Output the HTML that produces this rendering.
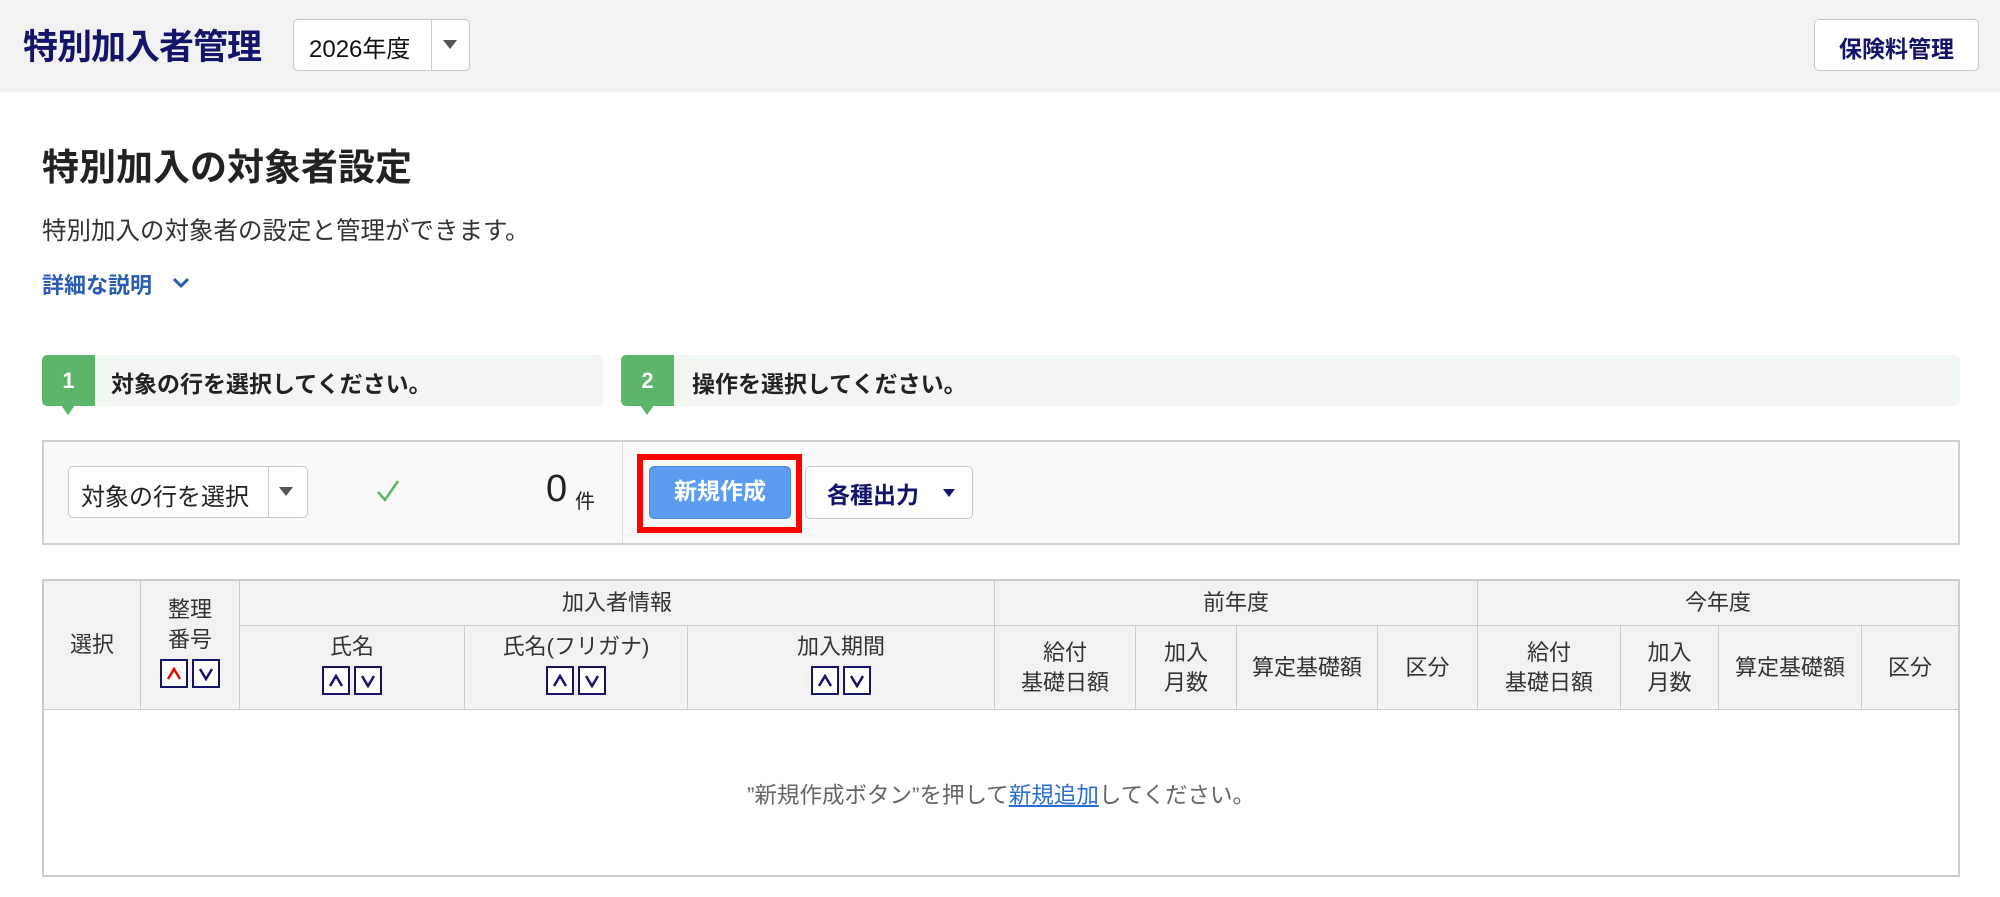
<!DOCTYPE html>
<html><head><meta charset="utf-8">
<style>
*{box-sizing:border-box;margin:0;padding:0}
body{width:2000px;height:897px;position:relative;background:#fff;font-family:"Liberation Sans","Noto Sans CJK JP",sans-serif;color:#333;overflow:hidden}
.a{position:absolute}
.hdr{left:0;top:0;width:2000px;height:92px;background:#f2f2f2}
.navy{color:#14146b}
.btn{border:1px solid #c8c8c8;border-radius:5px;background:#fff}
.step{background:#f1f8f1;border-radius:5px;height:51px}
.num{background:#5cb56a;color:#fff;font-weight:bold;font-size:22px;width:53px;height:51px;display:flex;align-items:center;justify-content:center;border-radius:5px 0 0 5px}
.tri{width:0;height:0;border-left:7px solid transparent;border-right:7px solid transparent;border-top:10px solid #5cb56a}
.steptxt{font-weight:bold;font-size:23px;color:#222}
.th{background:#f2f2f2;border-right:1px solid #ccc;border-bottom:1px solid #ccc;font-size:22px;color:#333;text-align:center;line-height:30px;display:flex;flex-direction:column;align-items:center;justify-content:center}
.sb{display:inline-block;width:28px;height:29px;border:2px solid #14146b;background:#fff;margin:0 2px;position:relative}
.sb svg{position:absolute;left:5px;top:6px}
</style></head><body>
<div class="a hdr"></div>
<div class="a navy" style="left:23px;top:19px;font-size:35px;font-weight:bold;letter-spacing:-1px">特別加入者管理</div>
<div class="a btn" style="left:293px;top:19px;width:177px;height:52px"></div>
<div class="a" style="left:309px;top:29px;font-size:24px;color:#111">2026年度</div>
<div class="a" style="left:431px;top:20px;width:1px;height:50px;background:#ccc"></div>
<div class="a" style="left:443px;top:40px;width:0;height:0;border-left:7px solid transparent;border-right:7px solid transparent;border-top:9px solid #555"></div>
<div class="a btn" style="left:1814px;top:19px;width:165px;height:52px"></div>
<div class="a navy" style="left:1814px;top:30px;width:165px;text-align:center;font-size:23px;font-weight:bold">保険料管理</div>

<div class="a" style="left:42px;top:137px;font-size:37px;font-weight:bold;color:#222">特別加入の対象者設定</div>
<div class="a" style="left:42px;top:212px;font-size:24.5px;color:#333">特別加入の対象者の設定と管理ができます。</div>
<div class="a" style="left:42px;top:268px;font-size:22px;font-weight:bold;color:#2a5db0">詳細な説明</div>
<svg class="a" style="left:172px;top:277px" width="18" height="12"><path d="M2 2 L9 9 L16 2" stroke="#2a5db0" stroke-width="3" fill="none"/></svg>

<div class="a step" style="left:42px;top:355px;width:561px"></div>
<div class="a num" style="left:42px;top:355px">1</div>
<div class="a tri" style="left:61px;top:405px"></div>
<div class="a steptxt" style="left:111px;top:365px">対象の行を選択してください。</div>
<div class="a step" style="left:621px;top:355px;width:1339px"></div>
<div class="a num" style="left:621px;top:355px">2</div>
<div class="a tri" style="left:640px;top:405px"></div>
<div class="a steptxt" style="left:692px;top:365px">操作を選択してください。</div>

<div class="a" style="left:42px;top:440px;width:1918px;height:105px;background:#f9f9f9;border:2px solid #d0d0d0"></div>
<div class="a" style="left:622px;top:442px;width:1px;height:101px;background:#ddd"></div>
<div class="a btn" style="left:68px;top:466px;width:240px;height:52px"></div>
<div class="a" style="left:81px;top:477px;font-size:24px;color:#222">対象の行を選択</div>
<div class="a" style="left:268px;top:467px;width:1px;height:50px;background:#ccc"></div>
<div class="a" style="left:279px;top:487px;width:0;height:0;border-left:7px solid transparent;border-right:7px solid transparent;border-top:9px solid #555"></div>
<svg class="a" style="left:375px;top:478px" width="26" height="26"><path d="M3 14 L10 22 L23 3" stroke="#5cb56a" stroke-width="2.5" fill="none"/></svg>
<div class="a" style="left:546px;top:468px;font-size:38px;color:#222">0</div>
<div class="a" style="left:575px;top:485px;font-size:20px;color:#222">件</div>
<div class="a" style="left:637px;top:454px;width:165px;height:79px;border:6px solid #f00"></div>
<div class="a" style="left:649px;top:466px;width:142px;height:53px;background:#5b9cf0;border-radius:5px;border:1px solid #4a8ae0;color:#fff;font-weight:bold;font-size:23px;text-align:center;line-height:48px">新規作成</div>
<div class="a btn" style="left:805px;top:466px;width:168px;height:53px"></div>
<div class="a navy" style="left:827px;top:476px;font-size:23px;font-weight:bold">各種出力</div>
<div class="a" style="left:943px;top:489px;width:0;height:0;border-left:6px solid transparent;border-right:6px solid transparent;border-top:8px solid #14146b"></div>

<div class="a" style="left:42px;top:579px;width:1918px;height:298px;border:2px solid #ccc"></div>
<div class="a th" style="left:44px;top:581px;width:97px;height:129px">選択</div>
<div class="a th" style="left:141px;top:581px;width:99px;height:129px"><div>整理<br>番号</div><div style="margin-top:4px"><span class="sb"><svg width="14" height="14"><path d="M1 12 L7 2 L13 12" stroke="#e00" stroke-width="2.5" fill="none"/></svg></span><span class="sb"><svg width="14" height="14"><path d="M1 2 L7 12 L13 2" stroke="#14146b" stroke-width="2.5" fill="none"/></svg></span></div></div>
<div class="a th" style="left:240px;top:581px;width:755px;height:45px">加入者情報</div>
<div class="a th" style="left:995px;top:581px;width:483px;height:45px">前年度</div>
<div class="a th" style="left:1478px;top:581px;width:480px;height:45px;border-right:none">今年度</div>
<div class="a th" style="left:240px;top:626px;width:225px;height:84px"><div>氏名</div><div style="margin-top:4px"><span class="sb"><svg width="14" height="14"><path d="M1 12 L7 2 L13 12" stroke="#14146b" stroke-width="2.5" fill="none"/></svg></span><span class="sb"><svg width="14" height="14"><path d="M1 2 L7 12 L13 2" stroke="#14146b" stroke-width="2.5" fill="none"/></svg></span></div></div>
<div class="a th" style="left:465px;top:626px;width:223px;height:84px"><div>氏名(フリガナ)</div><div style="margin-top:4px"><span class="sb"><svg width="14" height="14"><path d="M1 12 L7 2 L13 12" stroke="#14146b" stroke-width="2.5" fill="none"/></svg></span><span class="sb"><svg width="14" height="14"><path d="M1 2 L7 12 L13 2" stroke="#14146b" stroke-width="2.5" fill="none"/></svg></span></div></div>
<div class="a th" style="left:688px;top:626px;width:307px;height:84px"><div>加入期間</div><div style="margin-top:4px"><span class="sb"><svg width="14" height="14"><path d="M1 12 L7 2 L13 12" stroke="#14146b" stroke-width="2.5" fill="none"/></svg></span><span class="sb"><svg width="14" height="14"><path d="M1 2 L7 12 L13 2" stroke="#14146b" stroke-width="2.5" fill="none"/></svg></span></div></div>
<div class="a th" style="left:995px;top:626px;width:141px;height:84px">給付<br>基礎日額</div>
<div class="a th" style="left:1136px;top:626px;width:101px;height:84px">加入<br>月数</div>
<div class="a th" style="left:1237px;top:626px;width:141px;height:84px">算定基礎額</div>
<div class="a th" style="left:1378px;top:626px;width:100px;height:84px">区分</div>
<div class="a th" style="left:1478px;top:626px;width:143px;height:84px">給付<br>基礎日額</div>
<div class="a th" style="left:1621px;top:626px;width:98px;height:84px">加入<br>月数</div>
<div class="a th" style="left:1719px;top:626px;width:143px;height:84px">算定基礎額</div>
<div class="a th" style="left:1862px;top:626px;width:96px;height:84px;border-right:none">区分</div>
<div class="a" style="left:44px;top:778px;width:1914px;text-align:center;font-size:22.5px;color:#666">”新規作成ボタン”を押して<span style="color:#2a6fd0;text-decoration:underline">新規追加</span>してください。</div>
</body></html>
